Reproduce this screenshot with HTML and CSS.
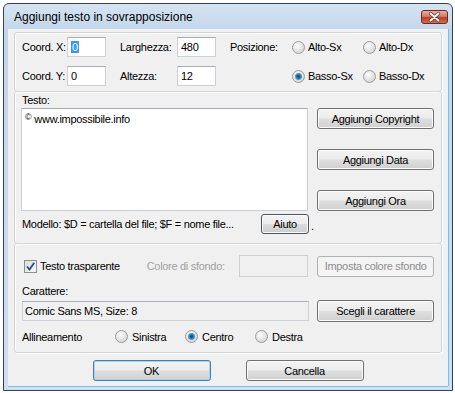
FILE: index.html
```html
<!DOCTYPE html>
<html lang="it">
<head>
    <meta charset="UTF-8">
    <title>Aggiungi testo in sovrapposizione</title>
    <link rel="stylesheet" href="styles.css">
</head>
<body>
    <div class="window">
        <div class="titlebar">
            <span class="title">Aggiungi testo in sovrapposizione</span>
            <span class="close">
                <svg width="25" height="12" viewBox="0 0 25 12">
                    <path d="M8.5 2.5 L16.5 9.5 M16.5 2.5 L8.5 9.5" stroke="#7a2c1f" stroke-width="3.4" stroke-linecap="round"/>
                    <path d="M8.5 2.5 L16.5 9.5 M16.5 2.5 L8.5 9.5" stroke="#ffffff" stroke-width="2" stroke-linecap="round"/>
                </svg>
            </span>
        </div>

        <div class="client">
            <div class="group pos">
                <span>Coord. X:</span>
                <span class="edit num"><span class="sel">0</span></span>
                <span>Larghezza:</span>
                <span class="edit num">480</span>
                <span>Posizione:</span>
                <label class="opt"><span class="radio"></span>Alto-Sx</label>
                <label class="opt"><span class="radio"></span>Alto-Dx</label>

                <span>Coord. Y:</span>
                <span class="edit num">0</span>
                <span>Altezza:</span>
                <span class="edit num">12</span>
                <span></span>
                <label class="opt"><span class="radio on"></span>Basso-Sx</label>
                <label class="opt"><span class="radio"></span>Basso-Dx</label>
            </div>

            <div class="group text-group">
                <div class="caption">Testo:</div>
                <div class="text-row">
                    <div class="edit textarea"><span class="copy">©</span> www.impossibile.info</div>
                    <div class="side-buttons">
                        <button class="btn">Aggiungi Copyright</button>
                        <button class="btn">Aggiungi Data</button>
                        <button class="btn">Aggiungi Ora</button>
                    </div>
                </div>
                <div class="hint-row">
                    <span class="hint">Modello: $D = cartella del file; $F = nome file...</span>
                    <button class="btn help">Aiuto</button>
                    <span class="dot">.</span>
                </div>
            </div>

            <div class="group style-group">
                <div class="row">
                    <label class="check-label"><span class="check">
                        <svg width="11" height="11" viewBox="0 0 11 11"><path d="M2 5.5 L4.5 8.5 L9.2 1.8" fill="none" stroke="#34477f" stroke-width="1.8"/></svg>
                    </span>Testo trasparente</label>
                    <span class="disabled-label">Colore di sfondo:</span>
                    <span class="edit color-box"></span>
                    <button class="btn disabled">Imposta colore sfondo</button>
                </div>
                <div class="caption font-caption">Carattere:</div>
                <div class="row">
                    <span class="edit font-field">Comic Sans MS, Size: 8</span>
                    <button class="btn tall">Scegli il carattere</button>
                </div>
                <div class="row align-row">
                    <span class="align-label">Allineamento</span>
                    <label class="opt"><span class="radio"></span>Sinistra</label>
                    <label class="opt"><span class="radio on"></span>Centro</label>
                    <label class="opt"><span class="radio"></span>Destra</label>
                </div>
            </div>

            <div class="dialog-buttons">
                <button class="btn wide default">OK</button>
                <button class="btn wide">Cancella</button>
            </div>
        </div>
    </div>
</body>
</html>
```

FILE: styles.css
```css
body {
    margin: 0;
    background: #ffffff;
    font-family: "Liberation Sans", Arial, sans-serif;
    font-size: 11px;
    letter-spacing: -0.3px;
    color: #000000;
}
.window {
    margin: 3px;
    width: 450px;
    height: 388px;
    box-sizing: border-box;
    border: 1px solid #34414d;
    border-radius: 6px 6px 0 0;
    background: linear-gradient(#d6e4f2, #c2d6eb 26px, #cddff0);
    padding: 0 4px 4px;
    display: flex;
    flex-direction: column;
}
.titlebar {
    height: 25px;
    display: flex;
    align-items: center;
    padding-left: 6px;
}
.title {
    font-size: 12px;
    letter-spacing: 0;
    color: #000000;
}
.close {
    margin-left: auto;
    margin-right: 0;
    width: 27px;
    height: 14px;
    box-sizing: border-box;
    border: 1px solid #6e2a1f;
    border-radius: 3px;
    background: linear-gradient(#e6b0a2, #d37a63 45%, #bd3f25 55%, #cf6d52);
    display: flex;
    align-items: center;
    justify-content: center;
}
.client {
    flex: 1;
    background: #f0f0f0;
    padding: 3px 6px 0 6px;
    box-shadow: 1px 0 0 #68c7ea, 0 1px 0 #68c7ea;
}
.group {
    box-sizing: border-box;
    border: 1px solid #d3d3d3;
    border-radius: 3px;
    box-shadow: inset 1px 1px 0 #ffffff, 1px 1px 0 #ffffff;
}
.pos {
    height: 60px;
    padding: 4px 7px 0;
    display: grid;
    grid-template-columns: 45px 53px 57px 53px 62px 71px 1fr;
    grid-template-rows: 20px 20px;
    row-gap: 9px;
    align-items: center;
}
.edit {
    box-sizing: border-box;
    background: #ffffff;
    border: 1px solid #cdd1d7;
    border-top-color: #a7adb6;
    display: flex;
    align-items: center;
}
.num {
    width: 39px;
    height: 20px;
    padding-left: 3px;
}
.sel {
    background: #3399ff;
    color: #ffffff;
    padding: 0 1px;
}
.opt {
    display: flex;
    align-items: center;
    gap: 3px;
}
.radio {
    width: 13px;
    height: 13px;
    box-sizing: border-box;
    border-radius: 50%;
    border: 1px solid #9c9c9c;
    background: radial-gradient(circle at 40% 35%, #fdfdfd, #dcdcdc 65%, #cbcbcb);
}
.radio.on {
    background: radial-gradient(circle, #0c4774 0, #246fa8 1.8px, #5aa6d7 3.2px, rgba(255, 255, 255, 0) 4px),
        radial-gradient(circle at 40% 35%, #fdfdfd, #dcdcdc 65%, #cbcbcb);
}
.text-group {
    height: 153px;
    margin-top: -1px;
    padding: 2px 7px 0;
}
.caption {
    line-height: 13px;
}
.text-row {
    display: flex;
    margin-top: 1px;
}
.textarea {
    margin-left: -1px;
    width: 288px;
    height: 103px;
    align-items: flex-start;
    padding: 4px 3px;
}
.copy {
    font-size: 9px;
    margin-right: 3px;
    position: relative;
    top: -1px;
}
.side-buttons {
    display: flex;
    flex-direction: column;
    gap: 20px;
    margin-left: 9px;
}
.btn {
    font: inherit;
    letter-spacing: inherit;
    width: 117px;
    height: 21px;
    padding: 0;
    border: 1px solid #707070;
    border-radius: 3px;
    background: linear-gradient(#f3f3f3, #ececec 48%, #dedede 52%, #d0d0d0);
    box-shadow: inset 0 0 0 1px #fbfbfb;
    color: #000000;
}
.hint-row {
    display: flex;
    align-items: center;
    margin-top: 3px;
    height: 20px;
}
.hint {
    width: 239px;
    white-space: nowrap;
    overflow: hidden;
}
.btn.help {
    width: 48px;
    height: 20px;
    border-color: #4a5560;
    background: linear-gradient(#f3f3f3, #ececec 48%, #dcdcdc 52%, #cdcdcd);
}
.dot {
    margin-left: 2px;
    margin-top: 4px;
}
.style-group {
    height: 110px;
    margin-top: -1px;
    padding: 11px 7px 0;
}
.row {
    display: flex;
    align-items: center;
}
.row:first-child {
    height: 22px;
}
.check-label {
    width: 125px;
    display: flex;
    align-items: center;
    gap: 3px;
}
.check {
    margin-left: 2px;
    width: 13px;
    height: 13px;
    box-sizing: border-box;
    border: 1px solid #8e8f8f;
    background: linear-gradient(135deg, #dcdcdc, #f7f7f7);
    display: flex;
    align-items: center;
    justify-content: center;
}
.disabled-label {
    width: 93px;
    color: #a0a0a0;
}
.color-box {
    width: 69px;
    height: 22px;
    background: #f0f0f0;
    border-color: #d0d0d0;
}
.btn.disabled {
    margin-left: 9px;
    color: #8d8d8d;
    border-color: #adb2b5;
    background: #f4f4f4;
    box-shadow: none;
}
.font-caption {
    margin-top: 8px;
}
.font-field {
    width: 288px;
    height: 20px;
    background: #f0f0f0;
    padding-left: 2px;
    margin-top: 2px;
}
.btn.tall {
    height: 22px;
    margin-left: 8px;
    margin-top: 2px;
}
.align-row {
    margin-top: 7px;
    height: 15px;
}
.align-label {
    width: 93px;
}
.align-row .opt {
    width: 70px;
    gap: 4px;
}
.dialog-buttons {
    display: flex;
    justify-content: center;
    gap: 35px;
    margin-top: 7px;
}
.btn.wide {
    width: 118px;
}
.btn.default {
    border-color: #3c7fb1;
    box-shadow: inset 0 0 0 1px #a6d8f5;
}
```
